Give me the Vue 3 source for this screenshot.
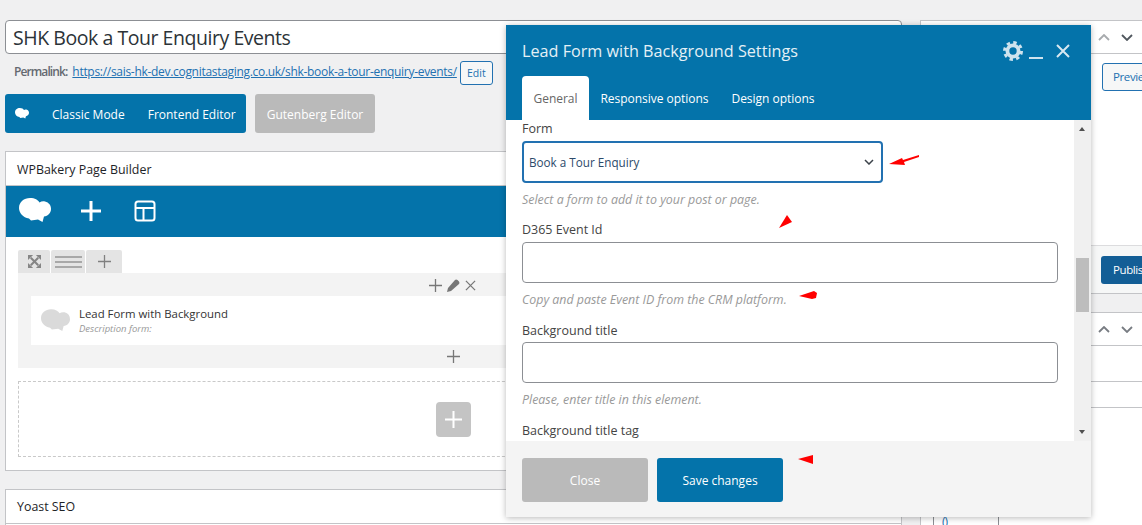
<template>
  <div class="page">
    <div class="main">
      <div class="title-input">SHK Book a Tour Enquiry Events</div>
      <div class="permalink">
        <strong>Permalink:</strong>
        <a class="permalink__url">https://sais-hk-dev.cognitastaging.co.uk/shk-book-a-tour-enquiry-events/</a>
        <span class="permalink__edit">Edit</span>
      </div>

      <div class="modes">
        <div class="modes__group">
          <svg class="modes__logo" viewBox="0 0 32 25"><path :d="logoPath" /></svg>
          <span class="modes__classic">Classic Mode</span>
          <span class="modes__front">Frontend Editor</span>
        </div>
        <div class="modes__guten">Gutenberg Editor</div>
      </div>

      <section class="panel panel--builder">
        <h2 class="panel__title">WPBakery Page Builder</h2>
        <div class="bar">
          <svg class="bar__logo" viewBox="0 0 32 25"><path :d="logoPath" /></svg>
          <svg class="bar__plus" viewBox="0 0 22 22"><path d="M11 1v20M1 11h20" /></svg>
          <svg class="bar__layout" viewBox="0 0 22 22">
            <rect x="1.5" y="1.5" width="19" height="19" rx="2.5" />
            <path d="M1.5 8h19M9.500 8v12.500" />
          </svg>
        </div>

        <div class="canvas">
          <div class="row-tabs">
            <span class="row-tab row-tab--a">
              <svg viewBox="0 0 14 14" width="13" height="13">
                <path d="M0 0h5.500L0 5.500zM14 0v5.500L8.500 0zM0 14V8.500L5.500 14zM14 14H8.500L14 8.500z" fill="#858585" />
                <path d="M3 3l8 8M11 3l-8 8" stroke="#858585" stroke-width="2.200" />
              </svg>
            </span>
            <span class="row-tab row-tab--b"><i></i><i></i><i></i></span>
            <span class="row-tab row-tab--c">
              <svg viewBox="0 0 13 13" width="13" height="13"><path d="M6.500 0v13M0 6.500h13" stroke="#808080" stroke-width="1.300" /></svg>
            </span>
          </div>

          <div class="row">
            <div class="row__controls">
              <svg viewBox="0 0 13 13" width="13" height="13"><path d="M6.500 0v13M0 6.500h13" stroke="#777" stroke-width="1.300" /></svg>
              <svg viewBox="0 0 13 13" width="13" height="13"><path d="M0 13l1-4 7-8q1-1 2.500 0l1.500 1.500q1 1.500 0 2.500l-8 7zM7.500 2.500l3 3" fill="#777" /></svg>
              <svg viewBox="0 0 12 12" width="11" height="11"><path d="M1 1l10 10M11 1L1 11" stroke="#777" stroke-width="1.400" /></svg>
            </div>
            <div class="element">
              <svg class="element__logo" viewBox="0 0 32 25"><path :d="logoPath" /></svg>
              <div>
                <div class="element__name">Lead Form with Background</div>
                <div class="element__desc">Description form:</div>
              </div>
            </div>
            <svg class="row__add" viewBox="0 0 13 13" width="13" height="13"><path d="M6.500 0v13M0 6.500h13" stroke="#777" stroke-width="1.300" /></svg>
          </div>

          <div class="dropzone">
            <span class="dropzone__btn">
              <svg viewBox="0 0 17 17" width="17" height="17"><path d="M8.500 0v17M0 8.500h17" stroke="#fff" stroke-width="2" /></svg>
            </span>
          </div>
        </div>
      </section>

      <section class="panel panel--yoast">
        <h2 class="panel__title">Yoast SEO</h2>
      </section>
    </div>

    <aside class="side">
      <div class="box box--publish">
        <div class="box__head">
          <svg class="chev chev--off" viewBox="0 0 12 7"><path d="M1 6l5-5 5 5" /></svg>
          <svg class="chev chev--dark" viewBox="0 0 12 7"><path d="M1 1l5 5 5-5" /></svg>
        </div>
        <div class="box__body">
          <span class="preview">Preview</span>
        </div>
        <div class="box__foot">
          <span class="publish">Publish</span>
        </div>
      </div>
      <div class="box box--second">
        <div class="box__head">
          <svg class="chev" viewBox="0 0 12 7"><path d="M1 6l5-5 5 5" /></svg>
          <svg class="chev" viewBox="0 0 12 7"><path d="M1 1l5 5 5-5" /></svg>
        </div>
        <div class="lines"></div>
        <div class="lines lines--short"></div>
        <div class="code-row"><span class="code-row__cell">()</span></div>
      </div>
    </aside>

    <div class="modal">
      <header class="modal__head">
        <div class="modal__top">
          <h1 class="modal__title">Lead Form with Background Settings</h1>
          <svg class="modal__gear" viewBox="0 0 20 20">
            <circle class="gear-body" cx="10" cy="10" r="5.600" />
            <circle class="gear-teeth" cx="10" cy="10" r="8.500" />
          </svg>
          <span class="modal__min"></span>
          <svg class="modal__close" viewBox="0 0 14 14"><path d="M1 1l12 12M13 1L1 13" /></svg>
        </div>
        <nav class="tabs">
          <span class="tab tab--on">General</span>
          <span class="tab">Responsive options</span>
          <span class="tab">Design options</span>
        </nav>
      </header>

      <div class="modal__body">
        <div class="form">
          <label class="lbl lbl--first">Form</label>
          <div class="select">
            <span>Book a Tour Enquiry</span>
            <svg viewBox="0 0 10 6" width="10" height="6"><path d="M1 1l4 4 4-4" fill="none" stroke="#3c434a" stroke-width="1.500" /></svg>
          </div>
          <p class="help help--a">Select a form to add it to your post or page.</p>

          <label class="lbl">D365 Event Id</label>
          <div class="field"></div>
          <p class="help">Copy and paste Event ID from the CRM platform.</p>

          <label class="lbl">Background title</label>
          <div class="field field--tight"></div>
          <p class="help">Please, enter title in this element.</p>

          <label class="lbl">Background title tag</label>
        </div>
        <div class="scroll">
          <i class="scroll__up"></i>
          <b class="scroll__thumb"></b>
          <i class="scroll__down"></i>
        </div>
      </div>

      <footer class="modal__foot">
        <span class="btn btn--close">Close</span>
        <span class="btn btn--save">Save changes</span>
      </footer>
    </div>

    <svg class="marks" viewBox="0 0 1142 525">
      <polygon points="889,164 902,158 903,160 919,155 919,157 904,162 905,165" />
      <polygon points="779,228 787,215 792,222" />
      <polygon points="799,296 814,291 817,293 816,298 812,299" />
      <polygon points="798,459 813,455 813,464" />
    </svg>
  </div>
</template>

<script setup>
// wpbakery cloud mark, shared by the mode bar, the toolbar and the element row
const logoPath =
  'M11 0C16 0 19 2 20.500 4.500 22 3.500 24 3 26 3.500 30 4.500 32 7.500 32 11 32 15 29 18 25 18.500L23.500 24 19 21.500 12 22.500 10 20.500C4 19.500 0 15 0 10 0 4 5 0 11 0Z'
</script>

<style>
html, body { margin: 0; background: #f0f0f1; }
</style>

<style scoped>
.page {
  position: relative;
  display: flex;
  width: 1142px;
  height: 525px;
  overflow: hidden;
  background: #f0f0f1;
  font-family: "Open Sans", sans-serif;
  font-size: 12px;
  color: #3c434a;
}
.main { flex: none; width: 897px; margin-left: 5px; padding-top: 20px; }
.title-input {
  box-sizing: border-box;
  height: 34px;
  padding-left: 7px;
  background: #fff;
  border: 1px solid #8c8f94;
  border-radius: 4px;
  font-size: 19.500px;
  letter-spacing: -0.45px;
  line-height: 34px;
  color: #2c3338;
}
.permalink { display: flex; height: 24px; margin-top: 7px; padding-left: 9px; font-size: 12px; line-height: 21px; color: #646970; }
.permalink strong { font-weight: 600; letter-spacing: -0.9px; }
.permalink__url { margin-left: 5px; letter-spacing: -0.3px; color: #2271b1; text-decoration: underline; }
.permalink__edit {
  box-sizing: border-box;
  width: 33px;
  height: 24px;
  margin-left: 3px;
  border: 1px solid #2271b1;
  border-radius: 3px;
  font-size: 10.500px;
  line-height: 22px;
  text-align: center;
  color: #2271b1;
  background: #f6f7f7;
}
.modes { display: flex; gap: 9px; margin-top: 9px; height: 39px; color: #fff; white-space: nowrap; }
.modes__group { display: flex; align-items: center; box-sizing: border-box; width: 241px; padding-top: 1px; background: #0473aa; border-radius: 3px; }
.modes__logo { width: 14px; height: 11px; margin: -2px 0 0 10px; fill: #fff; }
.modes__classic { margin-left: 23px; }
.modes__front { margin-left: 23px; }
.modes__guten { width: 120px; background: #bababa; border-radius: 3px; line-height: 41px; text-align: center; }
.panel { background: #fff; border: 1px solid #c3c4c7; }
.panel--builder { margin-top: 18px; height: 318px; }
.panel--yoast { margin-top: 18px; height: 60px; }
.panel__title {
  margin: 0;
  height: 33px;
  padding-left: 11px;
  border-bottom: 1px solid #c3c4c7;
  font-size: 12.400px;
  font-weight: 400;
  line-height: 35px;
  color: #1d2327;
}
.panel--yoast .panel__title { line-height: 33px; }
.bar { display: flex; align-items: center; box-sizing: border-box; height: 51px; padding-bottom: 2px; background: #0473aa; }
.bar__logo { width: 32px; height: 25px; margin-left: 13px; fill: #fff; }
.bar__plus { width: 22px; height: 22px; margin-left: 29px; fill: none; stroke: #fff; stroke-width: 3; }
.bar__layout { width: 22px; height: 22px; margin-left: 32px; fill: none; stroke: #fff; stroke-width: 2; }
.canvas { padding: 13px 12px 0; }
.row-tabs { display: flex; gap: 1px; height: 23px; }
.row-tab { display: flex; align-items: center; justify-content: center; height: 23px; background: #e4e4e4; border-radius: 2px 2px 0 0; }
.row-tab--a { width: 32px; }
.row-tab--b { width: 34px; flex-direction: column; gap: 3px; }
.row-tab--b i { display: block; width: 27px; height: 2px; background: #a8a8a8; }
.row-tab--c { width: 36px; }
.row { display: flex; flex-direction: column; align-items: center; height: 95px; background: #f3f3f3; }
.row__controls { display: flex; align-items: center; gap: 5px; height: 23px; padding: 1px 2px 0 0; box-sizing: border-box; }
.element { display: flex; align-self: stretch; align-items: center; height: 49px; margin: 0 13px; background: #fff; }
.element__logo { width: 29px; height: 23px; margin: 0 9px 0 10px; fill: #dadada; }
.element__name { font-size: 11.400px; line-height: 15px; color: #333; }
.element__desc { font-size: 9.500px; font-style: italic; line-height: 15px; color: #999; }
.row__add { margin-top: 5px; }
.dropzone {
  display: flex;
  align-items: center;
  justify-content: center;
  box-sizing: border-box;
  height: 76px;
  margin-top: 13px;
  border: 1px dashed #c9c9c9;
}
.dropzone__btn { display: flex; align-items: center; justify-content: center; width: 35px; height: 35px; background: #c4c4c4; border-radius: 4px; }

.side { flex: none; width: 280px; margin: 20px 0 0 18px; }
.box { background: #fff; border: 1px solid #c3c4c7; }
.box__head { display: flex; align-items: center; gap: 11px; box-sizing: border-box; height: 33px; padding-left: 177px; border-bottom: 1px solid #c3c4c7; }
.chev { width: 12px; height: 7px; fill: none; stroke: #787c82; stroke-width: 1.800; }
.chev--off { stroke: #a7aaad; }
.chev--dark { stroke: #50575e; }
.box__body { box-sizing: border-box; height: 191px; padding: 9px 0 0 181px; }
.preview {
  display: block;
  box-sizing: border-box;
  width: 90px;
  height: 28px;
  padding-left: 10px;
  background: #f6f7f7;
  border: 1px solid #2271b1;
  border-radius: 3px;
  font-size: 11.500px;
  letter-spacing: -0.4px;
  line-height: 26px;
  color: #2271b1;
}
.box__foot { box-sizing: border-box; height: 48px; padding: 10px 0 0 180px; background: #f6f7f7; border-top: 1px solid #dcdcde; }
.publish { display: block; width: 90px; height: 28px; padding-left: 12px; background: #135e96; border-radius: 3px; font-size: 11.500px; letter-spacing: -0.4px; line-height: 28px; color: #fff; }
.box--second { height: 300px; margin-top: 18px; }
.lines { height: 35px; border-bottom: 1px solid #c3c4c7; }
.lines--short { height: 25px; }
.code-row { display: flex; height: 60px; padding: 104px 0 0 12px; box-sizing: content-box; }
.code-row__cell { box-sizing: border-box; width: 66px; height: 60px; padding: 3px 0 0 8px; border: solid #8c8f94; border-width: 0 1px; font-size: 12px; letter-spacing: -1px; line-height: 14px; color: #2271b1; }

.modal {
  position: absolute;
  left: 506px;
  top: 25px;
  display: flex;
  flex-direction: column;
  width: 585px;
  height: 492px;
  background: #fff;
  box-shadow: 0 1px 6px rgba(0, 0, 0, 0.28);
}
.modal__head { flex: none; height: 95px; background: #0473aa; color: #fff; }
.modal__top { display: flex; align-items: center; height: 51px; padding-left: 16px; }
.modal__title { flex: 1; margin: 0; font-size: 16.200px; font-weight: 400; color: #e4f0f6; }
.modal__gear { width: 20px; height: 20px; }
.gear-body { fill: none; stroke: #cfe3ee; stroke-width: 3.800; }
.gear-teeth { fill: none; stroke: #cfe3ee; stroke-width: 3; stroke-dasharray: 3.400 3.275; }
.modal__min { width: 14px; height: 2px; margin: 15px 0 0 6px; background: #cfe3ee; }
.modal__close { width: 14px; height: 14px; margin: 0 21px 0 13px; fill: none; stroke: #d8e8f1; stroke-width: 2; }
.tabs { display: flex; height: 44px; padding-left: 16px; }
.tab { padding: 0 11.500px; font-size: 12px; line-height: 45px; letter-spacing: -0.03px; color: #fff; }
.tab--on { padding: 0 11.500px; background: #fff; border-radius: 4px 4px 0 0; color: #666; }
.modal__body { display: flex; flex: none; height: 321px; overflow: hidden; }
.form { flex: 1; padding-left: 16px; }
.lbl { display: block; font-size: 12.500px; line-height: 16px; color: #444; }
.lbl--first { margin: 1px 0 4px; }
.select {
  display: flex;
  align-items: center;
  justify-content: space-between;
  box-sizing: border-box;
  width: 361px;
  height: 42px;
  padding: 0 7px 0 5px;
  border: 2px solid #2271b1;
  border-radius: 4px;
  font-size: 11.700px;
  color: #2c4a6a;
}
.field { box-sizing: border-box; width: 536px; height: 41px; margin-top: 4px; border: 1px solid #8c8f94; border-radius: 4px; }
.field--tight { margin-top: 3px; }
.help { margin: 8px 0 14px; font-size: 12.400px; font-style: italic; line-height: 18px; color: #999; }
.help--a { margin: 8px 0 13px; }
.scroll { position: relative; flex: none; width: 17px; background: #f0f0f0; }
.scroll__thumb { position: absolute; left: 2px; top: 138px; width: 13px; height: 54px; background: #bdbdbd; }
.scroll__up, .scroll__down { position: absolute; left: 5px; width: 0; height: 0; border: 3.500px solid transparent; }
.scroll__up { top: 4px; border-bottom: 4px solid #505050; }
.scroll__down { bottom: 4px; border-top: 4px solid #505050; }
.modal__foot { display: flex; flex: 1; gap: 9px; padding: 17px 16px 0; background: #f4f4f4; }
.btn { width: 126px; height: 44px; border-radius: 3px; line-height: 45px; text-align: center; color: #fff; font-size: 12px; }
.btn--close { background: #bababa; }
.btn--save { background: #0473aa; }
.marks { position: absolute; left: 0; top: 0; width: 1142px; height: 525px; fill: #ff0000; pointer-events: none; }
</style>
